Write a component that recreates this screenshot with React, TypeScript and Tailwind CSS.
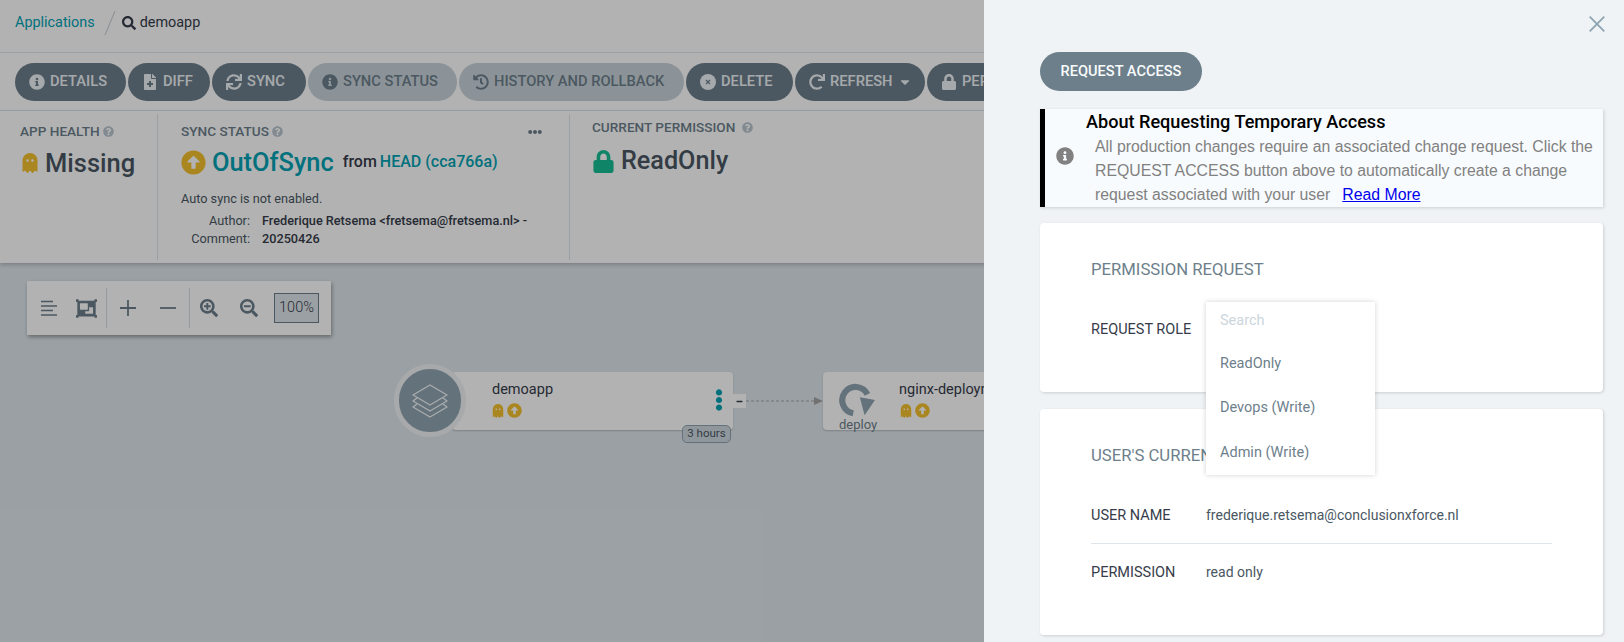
import type { ReactNode } from "react";
import {
  FaArrowAltCircleUp,
  FaCaretDown,
  FaEllipsisH,
  FaEllipsisV,
  FaFileMedical,
  FaGhost,
  FaHistory,
  FaInfoCircle,
  FaLock,
  FaMinus,
  FaObjectGroup,
  FaQuestionCircle,
  FaRedo,
  FaSearch,
  FaSearchMinus,
  FaSearchPlus,
  FaSync,
} from "react-icons/fa";

const ActionButton = ({
  icon,
  label,
  width,
  light,
  trailing,
}: {
  icon: ReactNode;
  label: string;
  width: string;
  light?: boolean;
  trailing?: ReactNode;
}) => (
  <div
    className={`flex h-[38px] shrink-0 items-center gap-[5px] rounded-[19px] pl-[14px] text-[14.7px] font-medium ${width} ${
      light ? "bg-[#c8d3da] text-[#6d7f8b]" : "bg-[#6d7f8b] text-[#eef3f6]"
    }`}
  >
    <span className="text-[16px]">{icon}</span>
    <span className="whitespace-nowrap">{label}</span>
    {trailing}
  </div>
);

const DeleteIcon = () => (
  <svg width="16" height="16" viewBox="0 0 16 16">
    <circle cx="8" cy="8" r="8" fill="currentColor" />
    <path d="M6 6 10 10M10 6 6 10" stroke="#6d7f8b" strokeWidth="1.2" />
  </svg>
);

const Help = () => (
  <FaQuestionCircle className="text-[11px] text-[#b9c6cf]" />
);

const AppNode = () => (
  <>
    <div className="absolute left-[452px] top-[109px] h-[58px] w-[281px] rounded-[4px] bg-white shadow-[0_1px_2px_rgba(0,0,0,0.2)]">
      <div className="absolute left-[40px] top-[8px] text-[14.5px] leading-[20px] text-[#363c4a]">demoapp</div>
      <div className="absolute left-[39px] top-[31px] flex items-center gap-[2px] text-[#f4c030]">
        <FaGhost className="text-[14px]" />
        <FaArrowAltCircleUp className="text-[15px]" />
      </div>
      <FaEllipsisV className="absolute left-[256px] top-[17px] text-[22px] text-[#00a2b3]" />
    </div>
    <div className="absolute left-[394px] top-[101px] flex h-[73px] w-[72px] items-center justify-center rounded-full border-[5px] border-[#f0f3f5] bg-[#8fa4b1]">
      <svg width="36" height="34" viewBox="0 0 36 34" fill="none" stroke="#f3f6f8" strokeWidth="1.3" strokeLinejoin="round">
        <path d="M18 1 35 11 18 21 1 11Z" />
        <path d="M5 14 1 17 18 27 35 17 31 14" />
        <path d="M5 20 1 23 18 33 35 23 31 20" />
      </svg>
    </div>
    <div className="absolute left-[733px] top-[131px] flex h-[14px] w-[13px] items-center justify-center bg-white text-[7px] text-[#363c4a]">
      <FaMinus />
    </div>
    <div className="absolute left-[682px] top-[162px] flex h-[18px] w-[49px] items-center justify-center rounded-[5px] border border-[#8fa4b1] bg-[#cfd9e0] text-[11.5px] text-[#495763]">
      3 hours
    </div>
  </>
);

const DeployNode = () => (
  <div className="absolute left-[823px] top-[109px] h-[58px] w-[281px] rounded-[4px] bg-white shadow-[0_1px_2px_rgba(0,0,0,0.2)]">
    <svg className="absolute left-[16px] top-[11px]" width="36" height="34" viewBox="0 0 38 34">
      <path d="M15 31A14 14 0 1 1 30 11" fill="none" stroke="#8fa4b1" strokeWidth="6.5" />
      <path d="M22 14 38 17 27 33Z" fill="#8fa4b1" />
    </svg>
    <div className="absolute left-[16px] top-[45px] text-[13px] leading-[16px] text-[#6d7f8b]">deploy</div>
    <div className="absolute left-[76px] top-[8px] whitespace-nowrap text-[14.5px] leading-[20px] text-[#363c4a]">nginx-deployment</div>
    <div className="absolute left-[76px] top-[31px] flex items-center gap-[2px] text-[#f4c030]">
      <FaGhost className="text-[14px]" />
      <FaArrowAltCircleUp className="text-[15px]" />
    </div>
  </div>
);

const GraphTools = () => (
  <div className="absolute left-[27px] top-[18px] flex h-[54px] w-[304px] items-center bg-white pl-[14px] text-[#6d7f8b] shadow-[1px_2px_4px_rgba(0,0,0,0.35)]">
    <svg width="16" height="16" viewBox="0 0 16 16" fill="none" stroke="#6d7f8b" strokeWidth="1.7">
      <path d="M0 1.5H12M0 6H16M0 10.5H12M0 15H16" />
    </svg>
    <FaObjectGroup className="ml-[19px] text-[21px]" />
    <div className="ml-[9px] h-[40px] w-px bg-[#d5dde2]" />
    <svg className="ml-[13px]" width="16" height="16" viewBox="0 0 16 16" fill="none" stroke="#6d7f8b" strokeWidth="1.8">
      <path d="M8 0V16M0 8H16" />
    </svg>
    <svg className="ml-[24px]" width="16" height="16" viewBox="0 0 16 16" fill="none" stroke="#6d7f8b" strokeWidth="1.8">
      <path d="M0 8H16" />
    </svg>
    <div className="ml-[13px] h-[40px] w-px bg-[#d5dde2]" />
    <FaSearchPlus className="ml-[10px] text-[18px]" />
    <FaSearchMinus className="ml-[22px] text-[18px]" />
    <div className="ml-[16px] flex h-[30px] w-[45px] items-center justify-center border border-[#6d7f8b] bg-[#dee6eb] text-[14.5px] font-light text-[#363c4a]">
      100%
    </div>
  </div>
);

const Application = () => (
  <div className="relative isolate flex h-full flex-col bg-white">
    <div className="flex h-[53px] shrink-0 items-center border-b border-[#dee6eb] pb-[6px] pl-[15px] text-[14.4px]">
      <span className="text-[#00a2b3]">Applications</span>
      <svg className="ml-[8px]" width="14" height="26" viewBox="0 0 14 26">
        <path d="M12 1 2 25" stroke="#c3ccd2" strokeWidth="1" />
      </svg>
      <FaSearch className="ml-[5px] text-[14px] text-[#363c4a]" />
      <span className="ml-[4px] text-[#363c4a]">demoapp</span>
    </div>
    <div className="flex h-[58px] shrink-0 items-center gap-[2px] overflow-hidden border-b border-[#dee6eb] pl-[15px]">
      <ActionButton width="w-[111px]" label="DETAILS" icon={<FaInfoCircle />} />
      <ActionButton width="w-[82px]" label="DIFF" icon={<FaFileMedical />} />
      <ActionButton width="w-[94px]" label="SYNC" icon={<FaSync />} />
      <ActionButton width="w-[149px]" light label="SYNC STATUS" icon={<FaInfoCircle />} />
      <ActionButton width="w-[225px]" light label="HISTORY AND ROLLBACK" icon={<FaHistory />} />
      <ActionButton width="w-[107px]" label="DELETE" icon={<DeleteIcon />} />
      <ActionButton width="w-[130px]" label="REFRESH" icon={<FaRedo />} trailing={<FaCaretDown className="text-[14px]" />} />
      <ActionButton width="w-[150px]" label="PERMISSIONS" icon={<FaLock />} />
    </div>
    <div className="relative z-10 flex h-[152px] shrink-0 bg-white py-[3px] shadow-[0_2px_4px_rgba(0,0,0,0.2)]">
      <div className="w-[158px] shrink-0 border-r border-[#dee6eb] pl-[20px] pt-[7px]">
        <div className="flex items-center gap-[3px] text-[13.6px] font-medium text-[#6d7f8b]">
          APP HEALTH <Help />
        </div>
        <div className="mt-[4px] flex items-center gap-[5px] text-[25.5px] font-medium leading-[36px] text-[#495763]">
          <FaGhost className="text-[20px] text-[#f4c030]" />
          Missing
        </div>
      </div>
      <div className="relative w-[412px] shrink-0 border-r border-[#dee6eb] pl-[23px] pt-[7px]">
        <div className="flex items-center gap-[3px] text-[13.6px] font-medium text-[#6d7f8b]">
          SYNC STATUS <Help />
        </div>
        <FaEllipsisH className="absolute right-[27px] top-[11px] text-[14px] text-[#6d7f8b]" />
        <div className="mt-[3px] flex items-center text-[25.4px] leading-[36px] text-[#00a2b3]">
          <FaArrowAltCircleUp className="text-[25px] text-[#f4c030]" />
          <span className="ml-[6px] font-medium">OutOfSync</span>
          <span className="ml-[9px] text-[16px] font-medium text-[#363c4a]">from</span>
          <span className="ml-[3px] text-[16px] font-medium">HEAD (cca766a)</span>
        </div>
        <div className="mt-[10px] text-[12.7px] leading-[18px] text-[#495763]">Auto sync is not enabled.</div>
        <div className="mt-[4px] grid grid-cols-[69px_1fr] gap-x-[12px] text-[12.7px] leading-[18px] text-[#495763]">
          <div className="text-right">Author:</div>
          <div className="font-medium text-[#363c4a]">Frederique Retsema &lt;fretsema@fretsema.nl&gt; -</div>
          <div className="text-right">Comment:</div>
          <div className="font-medium text-[#363c4a]">20250426</div>
        </div>
      </div>
      <div className="pl-[22px] pt-[3px]">
        <div className="flex items-center gap-[7px] text-[13.6px] font-medium text-[#6d7f8b]">
          CURRENT PERMISSION <Help />
        </div>
        <div className="mt-[6px] flex items-center gap-[6px] text-[25.2px] font-medium leading-[36px] text-[#495763]">
          <FaLock className="text-[23px] text-[#18be94]" />
          ReadOnly
        </div>
      </div>
    </div>
    <div className="relative flex-1 bg-[#dee6eb]">
      <GraphTools />
      <svg className="absolute left-[746px] top-[128px]" width="78" height="20" viewBox="0 0 78 20">
        <path d="M0 10H68" stroke="#a3a3a3" strokeWidth="1.2" strokeDasharray="3 2" />
        <path d="M68 6 77 10 68 14Z" fill="#a3a3a3" />
      </svg>
      <AppNode />
      <DeployNode />
    </div>
  </div>
);

const Row = ({ label, children }: { label: string; children: ReactNode }) => (
  <div className="flex items-center">
    <div className="w-[115px] shrink-0 text-[14.5px] text-[#363c4a]">{label}</div>
    <div className="text-[14px] text-[#495763]">{children}</div>
  </div>
);

const RolePicker = () => (
  <div className="absolute left-[166px] top-[79px] z-10 h-[173px] w-[169px] bg-white pl-[14px] text-[14.5px] text-[#6d7f8b] shadow-[0_0_5px_rgba(0,0,0,0.18)]">
    <div className="mt-[9px] leading-[20px] text-[#ccd6dd]">Search</div>
    <div className="mt-[23px] leading-[20px]">ReadOnly</div>
    <div className="mt-[24px] leading-[20px]">Devops (Write)</div>
    <div className="mt-[25px] leading-[20px]">Admin (Write)</div>
  </div>
);

const AccessPanel = () => (
  <div className="absolute inset-y-0 right-0 w-[640px] overflow-hidden bg-[#eff3f6] pl-[56px] pr-[21px]">
    <svg className="absolute left-[605px] top-[16px]" width="16" height="16" viewBox="0 0 16 16">
      <path d="M0.7 0.7 15.3 15.3M15.3 0.7 0.7 15.3" stroke="#8fa4b1" strokeWidth="1.8" />
    </svg>
    <div className="mt-[52px] flex h-[39px] w-[162px] items-center justify-center rounded-[20px] bg-[#6d7f8b] text-[14.6px] font-medium text-[#f8fbfb]">
      REQUEST ACCESS
    </div>
    <div className="mt-[18px] flex h-[98px] items-start border-l-[5px] border-black bg-[#f8fbfd] shadow-[1px_1px_3px_rgba(0,0,0,0.15)]">
      <FaInfoCircle className="ml-[11px] mt-[38px] shrink-0 text-[18px] text-[#818181]" />
      <div className="ml-[12px] min-w-0">
        <div className="text-[18.1px] font-medium leading-[26px] text-black">About Requesting Temporary Access</div>
        <div className="ml-[9px] w-[506px] text-[15.8px] leading-[24px] text-[#818181] font-['Liberation_Sans',sans-serif]">
          All production changes require an associated change request. Click the REQUEST ACCESS button above to automatically create a change request associated with your user
          <span className="ml-[12px] text-[#0000ee] underline">Read More</span>
        </div>
      </div>
    </div>
    <div className="relative mt-[16px] h-[169px] rounded-[4px] bg-white pl-[51px] pt-[36px] shadow-[1px_1px_3px_rgba(0,0,0,0.15)]">
      <div className="text-[16.7px] leading-[22px] text-[#6d7f8b]">PERMISSION REQUEST</div>
      <div className="mt-[39px] text-[14.5px] leading-[20px] text-[#363c4a]">REQUEST ROLE</div>
      <RolePicker />
    </div>
    <div className="mt-[17px] h-[226px] rounded-[4px] bg-white px-[51px] pt-[36px] shadow-[1px_1px_3px_rgba(0,0,0,0.15)]">
      <div className="text-[16.7px] leading-[22px] text-[#6d7f8b]">USER'S CURRENT PERMISSION</div>
      <div className="mt-[38px] border-b border-[#dee6eb] pb-[16px]">
        <Row label="USER NAME">frederique.retsema@conclusionxforce.nl</Row>
      </div>
      <div className="mt-[18px]">
        <Row label="PERMISSION">read only</Row>
      </div>
    </div>
  </div>
);

export default function App() {
  return (
    <div className="relative h-[642px] w-[1624px] overflow-hidden font-['Roboto',sans-serif]">
      <Application />
      <div className="absolute inset-0 bg-black/30" />
      <AccessPanel />
    </div>
  );
}
